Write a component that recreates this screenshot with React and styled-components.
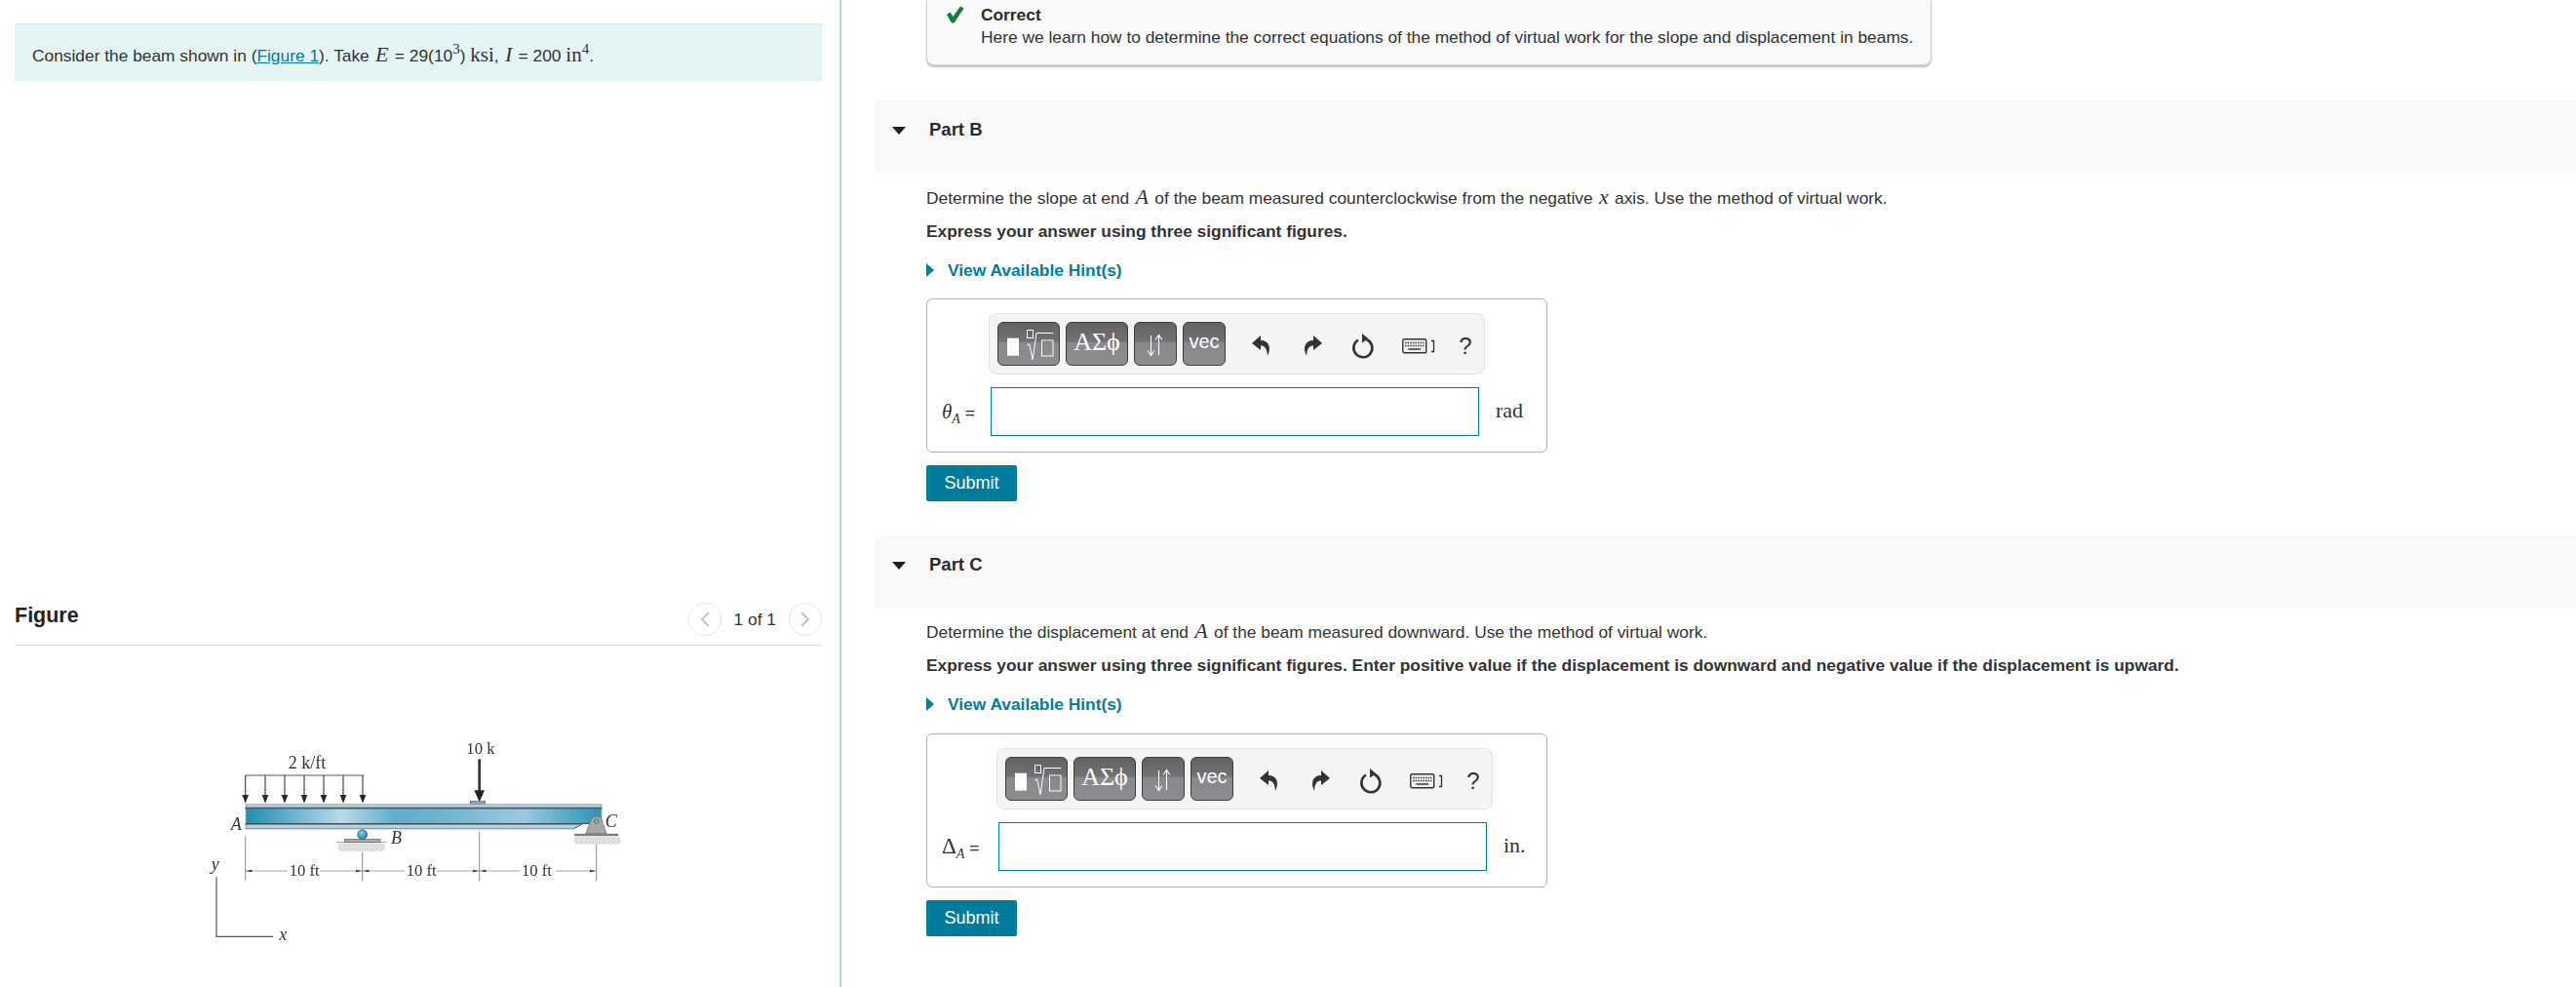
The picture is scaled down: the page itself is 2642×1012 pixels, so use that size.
import React from "react";
import styled, { createGlobalStyle } from "styled-components";

const Global = createGlobalStyle`
  html, body { margin: 0; padding: 0; background: #fff; }
  body { font-family: "Liberation Sans", Arial, sans-serif; color: #333; font-size: 17.35px; }
  * { box-sizing: border-box; }
`;

const TEAL = "#007c9e";

const Page = styled.div`
  display: flex;
  width: 2642px;
  height: 1012px;
  overflow: hidden;
`;
const LeftColumn = styled.aside`
  width: 863px;
  flex: none;
  padding: 24px 18px 0 15px;
  border-right: 2px solid #bccde3;
`;
const InfoBox = styled.div`
  height: 59px;
  padding: 4px 18px 0;
  display: flex;
  align-items: center;
  background: #e5f4f5;
  border-top: 1px solid #dfe5e6;
  line-height: 24px;
`;
const InfoText = styled.p`
  margin: 0;
  white-space: pre;
`;
const Link = styled.a`
  color: ${TEAL};
  text-decoration: underline;
`;
const MathI = styled.span`
  font-family: "Liberation Serif", serif;
  font-style: italic;
  font-size: ${(p) => p.$size || 22}px;
  margin: 0 ${(p) => (p.$tight ? 0 : 1.5)}px;
`;
const MathR = styled.span`
  font-family: "Liberation Serif", serif;
  font-size: ${(p) => p.$size || 21}px;
`;
const Sup = styled.sup`
  font-family: "Liberation Serif", serif;
  font-size: 15px;
  line-height: 0;
  vertical-align: 8px;
`;
const Sub = styled.sub`
  font-family: "Liberation Serif", serif;
  font-style: italic;
  font-size: 14px;
  line-height: 0;
  vertical-align: -5px;
`;
const FigureHeader = styled.header`
  margin-top: 535px;
  height: 44px;
  display: flex;
  justify-content: space-between;
  align-items: flex-start;
  border-bottom: 1px solid #dedede;
`;
const FigureTitle = styled.h2`
  margin: 0;
  font-size: 21.5px;
  line-height: 26px;
  font-weight: 700;
  color: #222;
`;
const Pager = styled.div`
  display: flex;
  align-items: center;
  height: 34px;
  gap: 13px;
  color: #333;
`;
const PagerButton = styled.span`
  width: 34px;
  height: 34px;
  border-radius: 50%;
  border: 1px solid #e6e6e6;
  display: flex;
  align-items: center;
  justify-content: center;
`;
const FigureSvg = styled.svg`
  display: block;
  margin: 77px 0 0 165px;
  filter: blur(0.45px);
`;

const RightColumn = styled.main`
  flex: 1;
  min-width: 0;
  padding-left: 34px;
`;
const Indented = styled.div`
  margin-left: 53px;
`;
const Feedback = styled.div`
  width: 1031px;
  height: 67px;
  margin-left: 53px;
  padding: 3px 14px 0 19px;
  display: flex;
  gap: 17px;
  background: #f9f9f9;
  border: 1px solid #d5d5d5;
  border-top: none;
  border-radius: 0 0 8px 8px;
  box-shadow: 0 2px 2px rgba(0, 0, 0, 0.25);
`;
const FeedbackTitle = styled.div`
  font-weight: 700;
  line-height: 24px;
  color: #2b2b2b;
`;
const FeedbackText = styled.div`
  line-height: 22px;
  white-space: nowrap;
`;
const Check = styled.svg`
  flex: none;
  margin-top: 3px;
`;
const Part = styled.section`
  margin-top: ${(p) => p.$top}px;
`;
const PartHeader = styled.div`
  height: 75px;
  padding: 18px 0 0 18px;
  display: flex;
  gap: 24px;
  background: #f9f9f9;
`;
const Caret = styled.span`
  width: 0;
  height: 0;
  margin-top: 9px;
  border-left: 7px solid transparent;
  border-right: 7px solid transparent;
  border-top: 8px solid #222;
`;
const PartTitle = styled.h3`
  margin: 0;
  font-size: 18.5px;
  line-height: 24px;
  font-weight: 700;
  color: #2b2b2b;
`;
const Prompt = styled.p`
  margin: ${(p) => p.$top}px 0 0;
  line-height: 24px;
  white-space: nowrap;
`;
const Instruction = styled.p`
  margin: 10px 0 0;
  line-height: 24px;
  font-weight: 700;
  white-space: nowrap;
`;
const Hint = styled.div`
  margin-top: 16px;
  height: 24px;
  display: flex;
  align-items: center;
  gap: 14px;
  color: ${TEAL};
  font-weight: 700;
`;
const HintCaret = styled.span`
  width: 0;
  height: 0;
  border-top: 7px solid transparent;
  border-bottom: 7px solid transparent;
  border-left: 8px solid ${TEAL};
`;
const AnswerCard = styled.div`
  width: 637px;
  height: 158px;
  margin-top: ${(p) => p.$top}px;
  padding: 14px 0 0 15px;
  border: 1px solid #b0b0b0;
  border-radius: 6px;
`;
const Toolbar = styled.div`
  width: 509px;
  height: 63px;
  margin-left: ${(p) => p.$labelWidth - 2}px;
  padding: 8px 0 0 8px;
  display: flex;
  align-items: flex-start;
  background: #f4f4f4;
  border: 1px solid #e2e2e2;
  border-radius: 8px;
`;
const ToolGroup = styled.div`
  display: flex;
  flex: none;
  gap: 6px;
  margin-right: 11px;
`;
const ToolButton = styled.span`
  width: ${(p) => p.$w}px;
  height: 45px;
  display: flex;
  align-items: flex-start;
  justify-content: center;
  color: #fff;
  border: 1px solid #3d3d3d;
  border-radius: 6px;
  background: linear-gradient(#626265 0, #727275 45%, #88888d 46%, #8c8c91 100%);
`;
const GreekLabel = styled.span`
  font-family: "Liberation Serif", serif;
  font-size: 26px;
  line-height: 40px;
`;
const VecLabel = styled.span`
  font-size: 20px;
  line-height: 38px;
`;
const IconSlot = styled.span`
  width: ${(p) => p.$w || 52}px;
  height: 45px;
  flex: none;
  margin-left: ${(p) => p.$gap || 0}px;
  display: flex;
  align-items: center;
  justify-content: center;
  padding-top: 4px;
  color: #333;
`;
const HelpGlyph = styled.span`
  font-size: 24px;
  line-height: 1;
  color: #333;
`;
const AnswerRow = styled.div`
  margin-top: 13px;
  display: flex;
  align-items: center;
`;
const AnswerLabel = styled.span`
  width: ${(p) => p.$labelWidth}px;
  flex: none;
  white-space: pre;
`;
const AnswerInput = styled.div`
  width: 501px;
  height: 50px;
  flex: none;
  background: #fff;
  border: 1.5px solid ${TEAL};
`;
const Unit = styled.span`
  margin: 0 0 3px 17px;
  font-family: "Liberation Serif", serif;
  font-size: 22px;
`;
const Submit = styled.button`
  display: block;
  width: 93px;
  height: 37px;
  margin-top: 13px;
  padding: 0;
  border: none;
  border-radius: 2px;
  background: ${TEAL};
  color: #fff;
  font: 18px "Liberation Sans", Arial, sans-serif;
`;

const Chevron = ({ dir }) => (
  <svg width="12" height="18" viewBox="0 0 12 18" fill="none" stroke="#c4c4c4" strokeWidth="2">
    <path d={dir === "l" ? "M10 2 L3 9 L10 16" : "M2 2 L9 9 L2 16"} />
  </svg>
);

const TemplateIcon = () => (
  <svg width="62" height="43" viewBox="0 0 62 43" fill="none" stroke="#fff" strokeWidth="1">
    <rect x="9" y="15.7" width="12" height="18" fill="#fff" stroke="none" />
    <rect x="29.5" y="7.5" width="6" height="8" />
    <path d="M29 23.3 L31.7 21.7 L35 37.7 L39 10.5 H56.3" />
    <rect x="44.5" y="18" width="11.5" height="16" />
  </svg>
);
const ArrowsIcon = () => (
  <svg width="42" height="43" viewBox="0 0 42 43" fill="none" stroke="#fff" strokeWidth="1.1">
    <path d="M16.5 13 V33 M13 28.5 L16.5 33.5 L20 28.5" />
    <path d="M24.5 33 V13 M21 17.5 L24.5 12.5 L28 17.5" />
  </svg>
);
const UndoIcon = ({ flip }) => (
  <svg width="20" height="22" viewBox="0 0 20 22" style={flip ? { transform: "scaleX(-1)" } : undefined}>
    <path d="M9 0 L0 8 L9 15 V10.5 C13 10.5 15.5 13 16 21 C20 13 18 5 9 5 Z" fill="#333" />
  </svg>
);
const ResetIcon = () => (
  <svg width="24" height="28" viewBox="0 0 24 28" fill="none" stroke="#333" strokeWidth="2.6">
    <path d="M15.5 7 A9.5 9.5 0 1 1 7 7.6" />
    <path d="M11 1 L17.5 6.2 L11 10.5 Z" fill="#333" stroke="none" />
  </svg>
);
const KeyboardIcon = () => (
  <svg width="34" height="16" viewBox="0 0 34 16" fill="none">
    <rect x="0.75" y="0.75" width="24" height="14" rx="1.5" fill="#eee" stroke="#333" strokeWidth="1.4" />
    <path d="M3 4.5 H22.5 M3 7.5 H22.5" stroke="#444" strokeWidth="1.6" strokeDasharray="1.6 1" />
    <path d="M6.5 11 H19" stroke="#444" strokeWidth="1.6" />
    <path d="M30 2.5 H32.5 V13.5 H30" stroke="#333" strokeWidth="1.3" />
  </svg>
);

const AnswerTools = ({ labelWidth }) => (
  <Toolbar $labelWidth={labelWidth}>
    <ToolGroup>
      <ToolButton $w={64}><TemplateIcon /></ToolButton>
      <ToolButton $w={64}><GreekLabel>ΑΣϕ</GreekLabel></ToolButton>
      <ToolButton $w={44}><ArrowsIcon /></ToolButton>
      <ToolButton $w={44}><VecLabel>vec</VecLabel></ToolButton>
    </ToolGroup>
    <IconSlot><UndoIcon /></IconSlot>
    <IconSlot><UndoIcon flip /></IconSlot>
    <IconSlot><ResetIcon /></IconSlot>
    <IconSlot $gap={5}><KeyboardIcon /></IconSlot>
    <IconSlot $w={20} $gap={12}><HelpGlyph>?</HelpGlyph></IconSlot>
  </Toolbar>
);

const Question = ({ top, promptTop, cardTop, title, prompt, instruction, label, labelWidth, unit }) => (
  <Part $top={top}>
    <PartHeader>
      <Caret />
      <PartTitle>{title}</PartTitle>
    </PartHeader>
    <Indented>
      <Prompt $top={promptTop}>{prompt}</Prompt>
      <Instruction>{instruction}</Instruction>
      <Hint><HintCaret />View Available Hint(s)</Hint>
      <AnswerCard $top={cardTop}>
        <AnswerTools labelWidth={labelWidth} />
        <AnswerRow>
          <AnswerLabel $labelWidth={labelWidth}>{label}</AnswerLabel>
          <AnswerInput />
          <Unit>{unit}</Unit>
        </AnswerRow>
      </AnswerCard>
      <Submit>Submit</Submit>
    </Indented>
  </Part>
);

const serif = '"Liberation Serif", serif';
const loads = [215, 276, 336, 396, 456, 516, 576];

const BeamFigure = () => (
  <FigureSvg width="500" height="240" viewBox="0 0 1500 720">
    <defs>
      <linearGradient id="web" x1="0" x2="1" y1="0" y2="0">
        <stop offset="0" stopColor="#1f8fb2" />
        <stop offset="0.1" stopColor="#5aaac8" />
        <stop offset="0.27" stopColor="#bcd9e7" />
        <stop offset="0.42" stopColor="#62aecb" />
        <stop offset="0.55" stopColor="#6fb4cf" />
        <stop offset="0.78" stopColor="#9dc9de" />
        <stop offset="1" stopColor="#2a93b5" />
      </linearGradient>
      <radialGradient id="ball" cx="0.4" cy="0.35" r="0.7">
        <stop offset="0" stopColor="#7fd0ea" />
        <stop offset="1" stopColor="#0f7fa8" />
      </radialGradient>
      <pattern id="grit" width="14" height="10" patternUnits="userSpaceOnUse">
        <rect width="14" height="10" fill="#e6e6e6" />
        <circle cx="3" cy="3" r="2" fill="#a8a8a8" />
        <circle cx="10" cy="7" r="1.6" fill="#bcbcbc" />
      </pattern>
    </defs>
    <path d="M215 168 H580" stroke="#555" strokeWidth="3" />
    {loads.map((x) => (
      <g key={x}>
        <path d={`M${x} 168 V235`} stroke="#444" strokeWidth="3.5" />
        <path d={`M${x - 10} 228 H${x + 10} L${x} 254 Z`} fill="#2a2a2a" />
      </g>
    ))}
    <text x="347" y="148" fontFamily={serif} fontSize="54" fill="#333">2 k/ft</text>
    <text x="895" y="103" fontFamily={serif} fontSize="50" fill="#333">10 k</text>
    <path d="M935 118 V225" stroke="#333" strokeWidth="8" />
    <path d="M919 214 H951 L935 250 Z" fill="#222" />
    <rect x="907" y="247" width="46" height="9" fill="#6fb0c8" stroke="#667" strokeWidth="2" />

    <rect x="215" y="256" width="1097" height="78" fill="#9a9fa3" />
    <rect x="218" y="259" width="1091" height="9" fill="#b6d8e6" />
    <rect x="215" y="266" width="1097" height="6" fill="#4a5d68" />
    <rect x="218" y="272" width="1091" height="44" fill="url(#web)" />
    <rect x="215" y="315" width="1097" height="5" fill="#3d4f5a" />
    <rect x="218" y="320" width="1091" height="9" fill="#b6d8e6" />
    <path d="M1225 332 L1250 318 H1312 V336 H1225 Z" fill="#fff" />
    <path d="M1225 332 L1252 318" stroke="#555" strokeWidth="3" />

    <text x="170" y="335" fontFamily={serif} fontStyle="italic" fontSize="54" fill="#333">A</text>
    <text x="663" y="378" fontFamily={serif} fontStyle="italic" fontSize="54" fill="#333">B</text>
    <text x="1322" y="326" fontFamily={serif} fontStyle="italic" fontSize="54" fill="#333">C</text>

    <circle cx="575" cy="350" r="15" fill="url(#ball)" stroke="#555" strokeWidth="2" />
    <rect x="520" y="365" width="110" height="8" fill="#aaa" stroke="#555" strokeWidth="2" />
    <path d="M495 374 H650" stroke="#777" strokeWidth="2" />
    <rect x="500" y="376" width="145" height="26" rx="12" fill="url(#grit)" />

    <path d="M1262 348 L1278 306 A18 18 0 0 1 1312 306 L1326 348 Z" fill="#a8a8a8" stroke="#666" strokeWidth="2" />
    <circle cx="1295" cy="309" r="7" fill="#6fb0c8" stroke="#555" strokeWidth="2" />
    <rect x="1228" y="348" width="134" height="6" fill="#888" stroke="#555" strokeWidth="1" />
    <rect x="1226" y="356" width="144" height="24" rx="10" fill="url(#grit)" />

    <g stroke="#777" strokeWidth="2.5" fill="none">
      <path d="M215 355 V491 M575 405 V493 M935 342 V493 M1295 380 V493" />
      <path d="M215 462 H345 M445 462 H705 M805 462 H1060 M1170 462 H1295" strokeWidth="2" />
    </g>
    <g fill="#333">
      <path d="M218 462 L235 458 V466 Z M572 462 L555 458 V466 Z M578 462 L595 458 V466 Z M932 462 L915 458 V466 Z M938 462 L955 458 V466 Z M1292 462 L1275 458 V466 Z" />
    </g>
    <text x="350" y="478" fontFamily={serif} fontSize="50" fill="#333">10 ft</text>
    <text x="710" y="478" fontFamily={serif} fontSize="50" fill="#333">10 ft</text>
    <text x="1065" y="478" fontFamily={serif} fontSize="50" fill="#333">10 ft</text>

    <path d="M126 480 V664 H300" stroke="#555" strokeWidth="3.5" fill="none" />
    <text x="110" y="460" fontFamily={serif} fontStyle="italic" fontSize="54" fill="#333">y</text>
    <text x="319" y="674" fontFamily={serif} fontStyle="italic" fontSize="54" fill="#333">x</text>
  </FigureSvg>
);

export default function App() {
  return (
    <>
      <Global />
      <Page>
        <LeftColumn>
          <InfoBox>
            <InfoText>
              Consider the beam shown in (<Link>Figure 1</Link>). Take <MathI>E</MathI> = 29(10<Sup>3</Sup>) <MathR>ksi</MathR>, <MathI>I</MathI> = 200 <MathR>in</MathR><Sup>4</Sup>.
            </InfoText>
          </InfoBox>
          <FigureHeader>
            <FigureTitle>Figure</FigureTitle>
            <Pager>
              <PagerButton><Chevron dir="l" /></PagerButton>
              1 of 1
              <PagerButton><Chevron dir="r" /></PagerButton>
            </Pager>
          </FigureHeader>
          <BeamFigure />
        </LeftColumn>
        <RightColumn>
          <Feedback>
            <Check width="19" height="18" viewBox="0 0 19 18">
              <path d="M1 9 L4.5 6.5 L7.5 11 L15 0.5 L18.5 2.5 L8.5 17.5 H6 Z" fill="#0a7d3a" />
            </Check>
            <div>
              <FeedbackTitle>Correct</FeedbackTitle>
              <FeedbackText>Here we learn how to determine the correct equations of the method of virtual work for the slope and displacement in beams.</FeedbackText>
            </div>
          </Feedback>
          <Question
            top={36}
            promptTop={12}
            cardTop={17}
            title="Part B"
            prompt={<>Determine the slope at end <MathI>A</MathI> of the beam measured counterclockwise from the negative <MathI>x</MathI> axis. Use the method of virtual work.</>}
            instruction="Express your answer using three significant figures."
            label={<><MathI $size={21} $tight>θ</MathI><Sub>A</Sub> =</>}
            labelWidth={50}
            unit="rad"
          />
          <Question
            top={35}
            promptTop={11}
            cardTop={18}
            title="Part C"
            prompt={<>Determine the displacement at end <MathI>A</MathI> of the beam measured downward. Use the method of virtual work.</>}
            instruction="Express your answer using three significant figures. Enter positive value if the displacement is downward and negative value if the displacement is upward."
            label={<><MathR $size={23}>Δ</MathR><Sub>A</Sub> =</>}
            labelWidth={58}
            unit="in."
          />
        </RightColumn>
      </Page>
    </>
  );
}
